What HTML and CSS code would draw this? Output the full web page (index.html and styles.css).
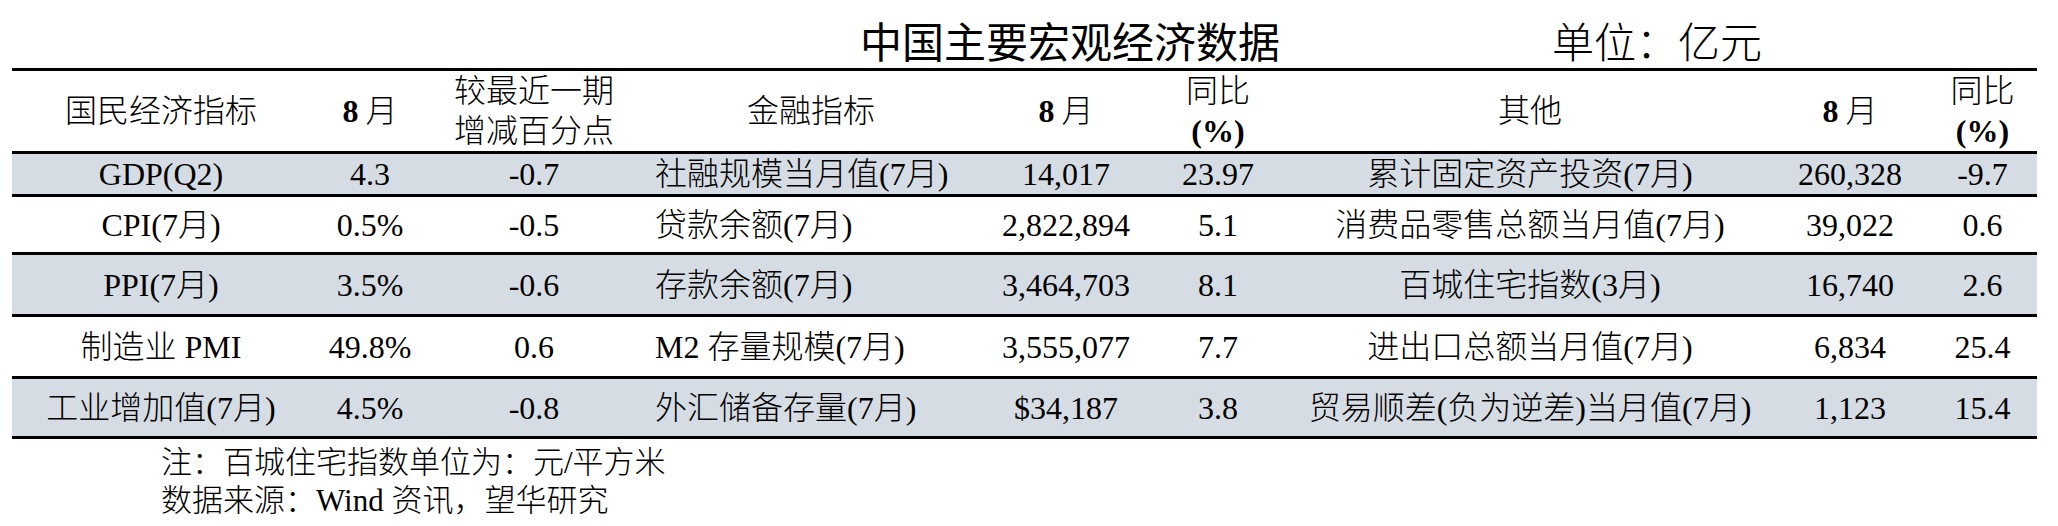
FILE: index.html
```html
<!DOCTYPE html>
<html lang="zh-CN">
<head>
<meta charset="utf-8">
<title>中国主要宏观经济数据</title>
<link rel="stylesheet" href="styles.css">
</head>
<body>
<div class="titlebar">
  <div class="title">中国主要宏观经济数据</div>
  <div class="unit">单位：亿元</div>
</div>
<div class="table">
  <div class="row head">
    <div class="c">国民经济指标</div>
    <div class="c"><b class="m">8</b>月</div>
    <div class="c two">较最近一期<br>增减百分点</div>
    <div class="c">金融指标</div>
    <div class="c"><b class="m">8</b>月</div>
    <div class="c two">同比<br><b>(%)</b></div>
    <div class="c">其他</div>
    <div class="c"><b class="m">8</b>月</div>
    <div class="c two">同比<br><b>(%)</b></div>
  </div>
  <div class="row shade r1">
    <div class="c">GDP(Q2)</div>
    <div class="c">4.3</div>
    <div class="c">-0.7</div>
    <div class="l">社融规模当月值(7月)</div>
    <div class="c">14,017</div>
    <div class="c">23.97</div>
    <div class="c">累计固定资产投资(7月)</div>
    <div class="c">260,328</div>
    <div class="c">-9.7</div>
  </div>
  <div class="row r2">
    <div class="c">CPI(7月)</div>
    <div class="c">0.5%</div>
    <div class="c">-0.5</div>
    <div class="l">贷款余额(7月)</div>
    <div class="c">2,822,894</div>
    <div class="c">5.1</div>
    <div class="c">消费品零售总额当月值(7月)</div>
    <div class="c">39,022</div>
    <div class="c">0.6</div>
  </div>
  <div class="row shade r3">
    <div class="c">PPI(7月)</div>
    <div class="c">3.5%</div>
    <div class="c">-0.6</div>
    <div class="l">存款余额(7月)</div>
    <div class="c">3,464,703</div>
    <div class="c">8.1</div>
    <div class="c">百城住宅指数(3月)</div>
    <div class="c">16,740</div>
    <div class="c">2.6</div>
  </div>
  <div class="row r4">
    <div class="c">制造业 PMI</div>
    <div class="c">49.8%</div>
    <div class="c">0.6</div>
    <div class="l">M2 存量规模(7月)</div>
    <div class="c">3,555,077</div>
    <div class="c">7.7</div>
    <div class="c">进出口总额当月值(7月)</div>
    <div class="c">6,834</div>
    <div class="c">25.4</div>
  </div>
  <div class="row shade r5">
    <div class="c">工业增加值(7月)</div>
    <div class="c">4.5%</div>
    <div class="c">-0.8</div>
    <div class="l">外汇储备存量(7月)</div>
    <div class="c">$34,187</div>
    <div class="c">3.8</div>
    <div class="c">贸易顺差(负为逆差)当月值(7月)</div>
    <div class="c">1,123</div>
    <div class="c">15.4</div>
  </div>
</div>
<div class="notes">
  <div>注：百城住宅指数单位为：元/平方米</div>
  <div>数据来源：Wind 资讯，望华研究</div>
</div>
</body>
</html>
```

FILE: styles.css
```css
html, body {
  margin: 0;
  padding: 0;
  background: #ffffff;
  color: #000000;
}

body {
  font-family: "Liberation Serif", "Noto Sans CJK SC", serif;
  width: 2058px;
}

.titlebar {
  height: 68px;
  display: flex;
  align-items: flex-end;
  padding-left: 860px;
  padding-bottom: 2px;
  box-sizing: border-box;
  font-family: "Noto Sans CJK SC", sans-serif;
  font-size: 42px;
  line-height: 52px;
  font-weight: 300;
}

.title {
  width: 420px;
  font-weight: 400;
}

.unit {
  margin-left: 272px;
}

.table {
  margin-left: 12px;
  width: 2025px;
  border-top: 3px solid #000;
  font-size: 32px;
  font-weight: 300;
}

.row {
  display: grid;
  grid-template-columns: 298px 120px 208px 346px 164px 140px 484px 156px 109px;
  align-items: center;
  border-bottom: 3px solid #000;
  line-height: 38px;
}

.shade {
  background: #d6dce4;
}

.head { height: 80px; }
.r1 { height: 40px; }
.r2 { height: 55px; }
.r3 { height: 59px; }
.r4 { height: 59px; }
.r5 { height: 57px; }

.two {
  line-height: 40px;
}

.c {
  text-align: center;
  white-space: nowrap;
}

.l {
  text-align: left;
  padding-left: 17px;
  white-space: nowrap;
}

b {
  font-weight: 700;
}

b.m {
  margin-right: 7px;
}

.notes {
  padding: 5px 0 0 161px;
  font-size: 31px;
  line-height: 38px;
  font-weight: 300;
}
```
